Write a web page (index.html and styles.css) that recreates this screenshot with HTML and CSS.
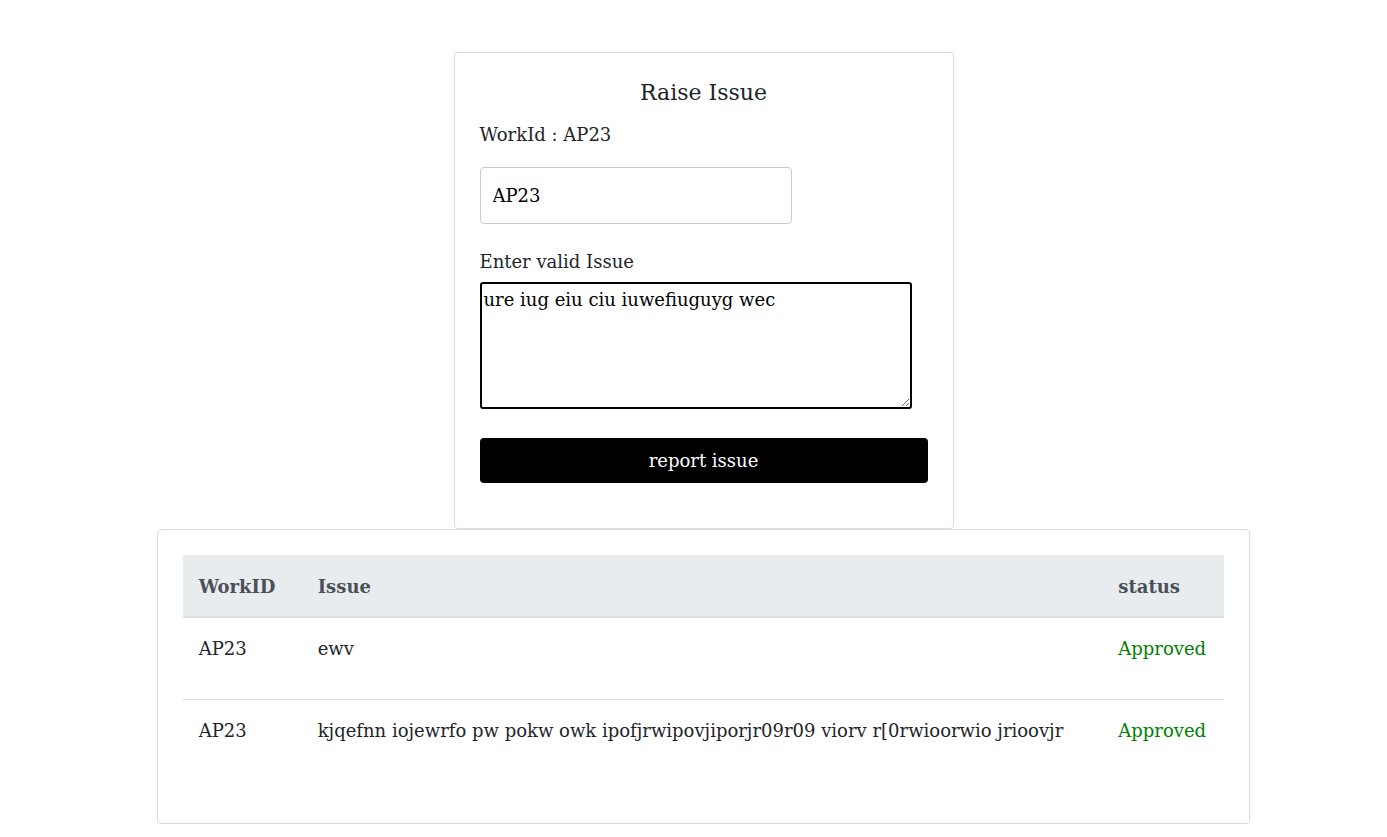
FILE: index.html
```html
<!DOCTYPE html>
<html>
<head>
<meta charset="utf-8">
<title>Raise Issue</title>
<link rel="stylesheet" href="styles.css">
</head>
<body>
<div class="page">
  <div class="card form-card">
    <h2 class="title">Raise Issue</h2>
    <p class="workid">WorkId : AP23</p>
    <input class="input" type="text" value="AP23">
    <label class="label">Enter valid Issue</label>
    <textarea class="issue" spellcheck="false">ure iug eiu ciu iuwefiuguyg wec</textarea>
    <button class="btn">report issue</button>
  </div>
  <div class="card table-card">
    <table class="issues">
      <thead>
        <tr><th class="c-id">WorkID</th><th>Issue</th><th class="c-status">status</th></tr>
      </thead>
      <tbody>
        <tr><td>AP23</td><td>ewv</td><td class="ok">Approved</td></tr>
        <tr><td>AP23</td><td>kjqefnn iojewrfo pw pokw owk ipofjrwipovjiporjr09r09 viorv r[0rwioorwio jrioovjr</td><td class="ok">Approved</td></tr>
      </tbody>
    </table>
  </div>
</div>
</body>
</html>
```
FILE: styles.css
```css
* { box-sizing: border-box; }
body {
  margin: 0;
  font-family: "DejaVu Serif", "Liberation Serif", serif;
  font-size: 18px;
  color: #212529;
  background: #fff;
}
.page {
  padding: 52px 0 0 20px;
  display: flex;
  flex-direction: column;
  align-items: center;
}
.card {
  border: 1px solid #dcdcdc;
  border-radius: 4px;
  background: #fff;
  padding: 25px;
}
.form-card { width: 500px; }
.title {
  margin: 0;
  font-weight: normal;
  font-size: 22px;
  line-height: 30px;
  text-align: center;
}
.workid {
  margin: 16px 0 0;
  line-height: 22px;
}
.input {
  display: block;
  margin-top: 21px;
  width: 312px;
  height: 57px;
  border: 1px solid #ccc;
  border-radius: 4px;
  padding: 0 12px;
  font: inherit;
  color: #000;
}
.label {
  display: block;
  margin-top: 27px;
  line-height: 22px;
}
.issue {
  display: block;
  margin-top: 9px;
  width: 432px;
  height: 127px;
  border: 2px solid #000;
  border-radius: 3px;
  padding: 5px 2px 0;
  font: inherit;
  color: #000;
  line-height: 22px;
}
.btn {
  display: block;
  margin: 29px 0 20px;
  width: 100%;
  height: 45px;
  border: none;
  border-radius: 4px;
  background: #000;
  color: #fff;
  font: inherit;
}
.table-card { width: 80%; }
.issues {
  width: 100%;
  border-collapse: collapse;
  margin-bottom: 17px;
}
.issues th, .issues td {
  text-align: left;
  vertical-align: top;
  line-height: 22px;
  padding: 0 16px;
}
.issues th {
  background: #e9ecef;
  color: #495057;
  font-weight: bold;
  padding-top: 21px;
  padding-bottom: 18px;
  border-bottom: 2px solid #dee2e6;
}
.issues td {
  padding-top: 20px;
  padding-bottom: 39px;
}
.issues tbody tr + tr td { border-top: 1px solid #dee2e6; }
.c-id { width: 119px; }
.c-status { width: 122px; }
.ok { color: #008000; }
```
